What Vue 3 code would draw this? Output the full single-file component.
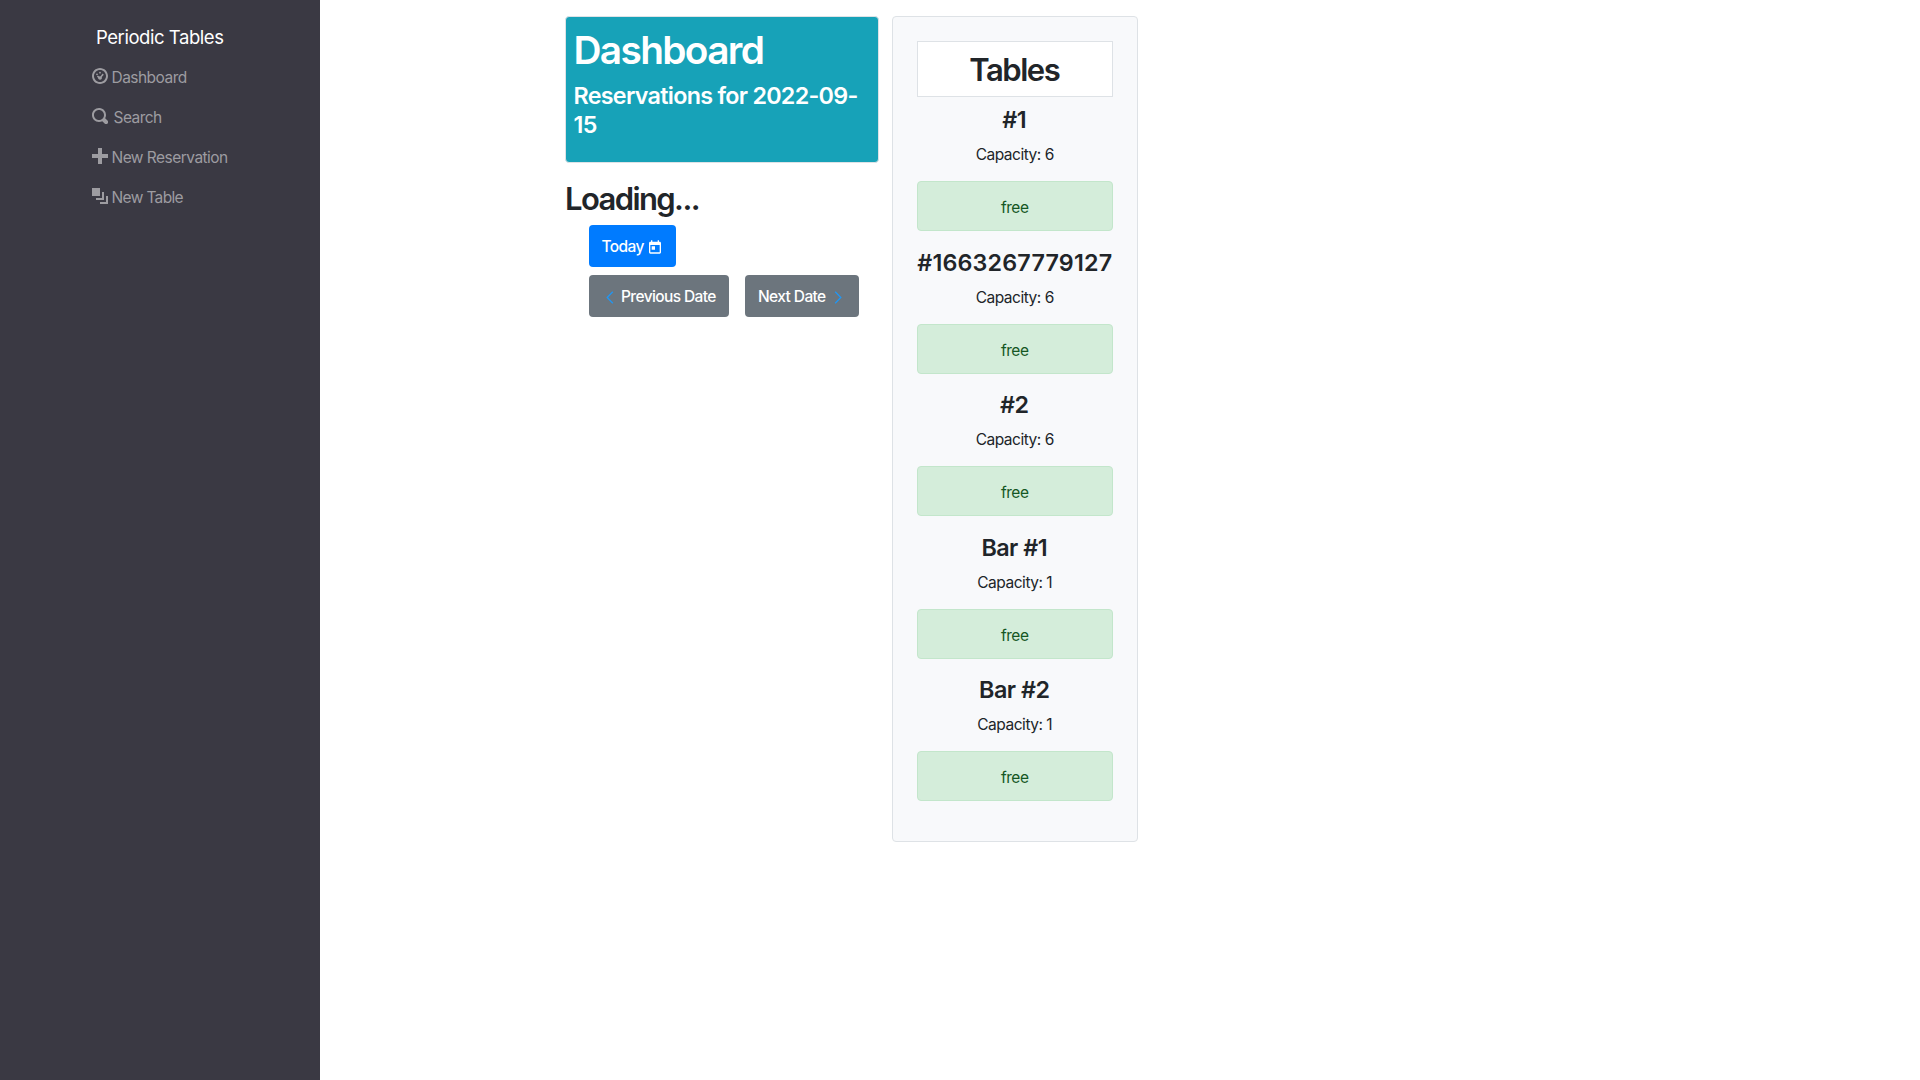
<script setup>
const links = [
  { label: 'Dashboard', cls: 'dash', icon: 'M4 0c-2.2 0-4 1.8-4 4s1.8 4 4 4 4-1.8 4-4-1.8-4-4-4zm0 1c1.66 0 3 1.34 3 3s-1.34 3-3 3-3-1.34-3-3 1.34-3 3-3zM4 1.9a.45.45 0 1 0 0 .9a.45.45 0 1 0 0-.9zM2.5 2.7a.45.45 0 1 0 0 .9a.45.45 0 1 0 0-.9zM5.3 2.75l.6.6-1 1.1c.25.8-.2 1.4-.9 1.4-.6 0-1-.45-1-.95l-.55-.6.5-.5.65.5c.2-.1.4-.15.6-.1z' },
  { label: 'Search', cls: 'search', icon: 'M3.5 0c-1.93 0-3.5 1.57-3.5 3.5s1.57 3.5 3.5 3.5c.59 0 1.17-.14 1.66-.41a1 1 0 0 0 .13.13l1 1a1.02 1.02 0 1 0 1.44-1.44l-1-1a1 1 0 0 0-.16-.13c.27-.49.44-1.06.44-1.66 0-1.93-1.55-3.5-3.5-3.5zm0 1c1.39 0 2.5 1.11 2.5 2.5 0 .66-.24 1.27-.66 1.72l-.03.03a1 1 0 0 0-.13.13c-.44.4-1.04.63-1.69.63-1.39 0-2.5-1.11-2.5-2.5s1.11-2.5 2.5-2.5z' },
  { label: 'New Reservation', cls: 'plus', icon: 'M3 0v3h-3v2h3v3h2v-3h3v-2h-3v-3h-2z' },
  { label: 'New Table', cls: 'layers', icon: 'M0 0v4h4v-4h-4zm5 2v3h-3v1h4v-4h-1zm2 2v3h-3v1h4v-4h-1z' },
]
const tables = [
  { name: '#1', capacity: 6 },
  { name: '#1663267779127', capacity: 6, long: true },
  { name: '#2', capacity: 6 },
  { name: 'Bar #1', capacity: 1 },
  { name: 'Bar #2', capacity: 1 },
]
</script>

<template>
  <div class="app">
    <nav class="side">
      <a class="brand">Periodic Tables</a>
      <a v-for="l in links" :key="l.label" class="link" :class="l.cls">
        <svg width="16" height="16" viewBox="0 0 8 8"><path :d="l.icon" fill="currentColor" fill-rule="evenodd" /></svg>
        <span>{{ l.label }}</span>
      </a>
    </nav>
    <main class="main">
      <section class="left">
        <div class="info">
          <h1>Dashboard</h1>
          <h4>Reservations for 2022-09-15</h4>
        </div>
        <h2 class="loading">Loading...</h2>
        <div class="buttons">
          <button class="btn today"><span>Today</span>
            <svg width="16" height="16" viewBox="0 0 24 24"><path fill="currentColor" d="M19 4h-1V2h-2v2H8V2H6v2H5c-1.11 0-1.99.9-1.99 2L3 20a2 2 0 0 0 2 2h14c1.1 0 2-.9 2-2V6c0-1.1-.9-2-2-2zm0 16H5V9h14v11zM7 11h5v5H7z" /></svg>
          </button>
          <div class="row">
            <button class="btn prev">
              <svg width="8" height="13" viewBox="0 0 8 13"><path d="M6.8 .8 1.2 6.5l5.6 5.7" /></svg>
              <span>Previous Date</span>
            </button>
            <button class="btn next">
              <span>Next Date</span>
              <svg width="8" height="13" viewBox="0 0 8 13"><path d="M1.2 .8 6.8 6.5l-5.6 5.7" /></svg>
            </button>
          </div>
        </div>
      </section>
      <section class="panel">
        <h2 class="title">Tables</h2>
        <div v-for="t in tables" :key="t.name" class="table">
          <h4 :class="{ long: t.long }">{{ t.name }}</h4>
          <p>Capacity: {{ t.capacity }}</p>
          <div class="status">free</div>
        </div>
      </section>
    </main>
  </div>
</template>

<style>
body { margin: 0; background: #fff; }
</style>

<style scoped>
.app, .app * { box-sizing: border-box; }
.app {
  display: flex;
  height: 1080px;
  font: 400 15.5px/24px Inter, "Liberation Sans", sans-serif;
  color: #212529;
  overflow: hidden;
}
h1, h2, h4, p { margin: 0; white-space: nowrap; }
h1, h2, h4 { font-weight: 600; }
svg { display: block; flex: none; }
.side {
  width: 320px;
  flex: none;
  background: #3a3943;
  padding: 17px 0 0 92px;
  display: flex;
  flex-direction: column;
}
.brand {
  height: 40px;
  line-height: 40px;
  padding-left: 4px;
  font-size: 18.5px;
  letter-spacing: -0.45px;
  color: #fff;
}
.link {
  height: 40px;
  display: flex;
  align-items: center;
  gap: 3.5px;
  color: #9d9ca1;
  letter-spacing: -0.53px;
}
.link svg { margin-top: -2px; }
.link span, .btn span { padding-top: 2px; }
.layers { letter-spacing: -0.65px; }
.search { gap: 5.5px; }
.main { display: flex; align-items: flex-start; gap: 13px; padding: 16px 0 0 245px; }
.left { width: 314px; flex: none; }
.info {
  height: 147px;
  padding: 9px 7.5px 7px;
  border: 1px solid #dee2e6;
  border-radius: 4px;
  background: #17a2b8;
  color: #fff;
}
.info h1 { font-size: 38.8px; line-height: 48px; margin-bottom: 8px; letter-spacing: -1.65px; }
.info h4 { font-size: 23.3px; line-height: 28.8px; letter-spacing: -0.71px; white-space: normal; }
.loading { margin-top: 17px; font-size: 31px; line-height: 38px; letter-spacing: -1.6px; }
.buttons { margin-top: 7px; padding-left: 24px; }
.row { display: flex; gap: 16px; margin-top: 8px; }
.btn {
  height: 42px;
  border: 0;
  border-radius: 4px;
  padding: 0 0 0 12.5px;
  font: inherit;
  font-weight: 500;
  color: #fff;
  display: flex;
  align-items: center;
  background: #6c757d;
  letter-spacing: -0.6px;
  white-space: nowrap;
}
.today { width: 87px; background: #007bff; gap: 3px; }
.today svg { margin-top: 2px; }
.prev { width: 140px; padding-left: 17px; gap: 7px; }
.next { width: 114px; gap: 8px; padding-left: 13px; }
.row svg { fill: none; stroke: #2196f3; stroke-width: 1.3; margin-top: 3px; }
.panel {
  width: 245.5px;
  height: 826.4px;
  flex: none;
  padding: 24px;
  border: 1px solid #dee2e6;
  border-radius: 4px;
  background: #f8f9fb;
  text-align: center;
}
.title {
  height: 56px;
  line-height: 40px;
  padding: 8px 9px 8px 8px;
  font-size: 31px;
  letter-spacing: -1.5px;
  border: 1px solid #dee2e6;
  background: #fff;
  margin-bottom: 8px;
}
.table { height: 142.5px; }
.table h4 { font-size: 23.3px; line-height: 30px; letter-spacing: -0.5px; padding-right: 1px; }
.table h4.long { letter-spacing: 0.18px; margin: 0 -4px; padding: 0; }
.table p { margin-top: 6.4px; line-height: 27px; letter-spacing: -0.48px; }
.status {
  height: 50px;
  margin-top: 13px;
  line-height: 51px;
  border: 1px solid #c3e6cb;
  border-radius: 4px;
  background: #d4edda;
  color: #155724;
  letter-spacing: -0.5px;
}
</style>
